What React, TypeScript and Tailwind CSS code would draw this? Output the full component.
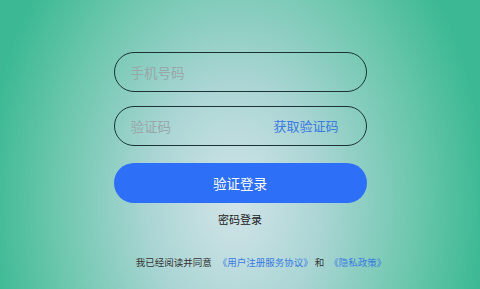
export default function App() {
  return (
    <div
      className="w-[480px] h-[289px] overflow-hidden bg-[radial-gradient(ellipse_52%_120%_at_49%_70%,#d2e4e8_0%,#aad5d4_35%,#6cc7ad_72%,#3cb994_100%)] flex flex-col items-center"
      style={{ fontFamily: '"Noto Sans CJK SC", "Noto Sans", sans-serif' }}
    >
      <div className="w-[253px] mt-[52px] flex flex-col">
        <div className="h-[40px] rounded-full border-[1.5px] border-[#1b3333] flex items-center px-[16px]">
          <span className="text-[13.5px] text-[#98a8a8]">手机号码</span>
        </div>

        <div className="h-[40px] mt-[14px] rounded-full border-[1.5px] border-[#1b3333] flex items-center justify-between pl-[16px] pr-[27px]">
          <span className="text-[13.5px] text-[#98a8a8]">验证码</span>
          <span className="text-[13px] text-[#3a7be0]">获取验证码</span>
        </div>

        <button className="h-[40px] mt-[17px] rounded-full bg-[#2d6ff7] text-white text-[13.5px] flex items-center justify-center">
          验证登录
        </button>

        <div className="mt-[6px] text-center text-[11px] text-[#222] leading-[20px]">密码登录</div>
      </div>

      <div className="mt-[26px] ml-[42px] flex items-center text-[9.5px] text-[#333] leading-[14px]">
        <span>我已经阅读并同意</span>
        <span className="ml-[6px] text-[#3a7be0]">《用户注册服务协议》</span>
        <span className="ml-[2px]">和</span>
        <span className="ml-[5px] text-[#3a7be0]">《隐私政策》</span>
      </div>
    </div>
  );
}
